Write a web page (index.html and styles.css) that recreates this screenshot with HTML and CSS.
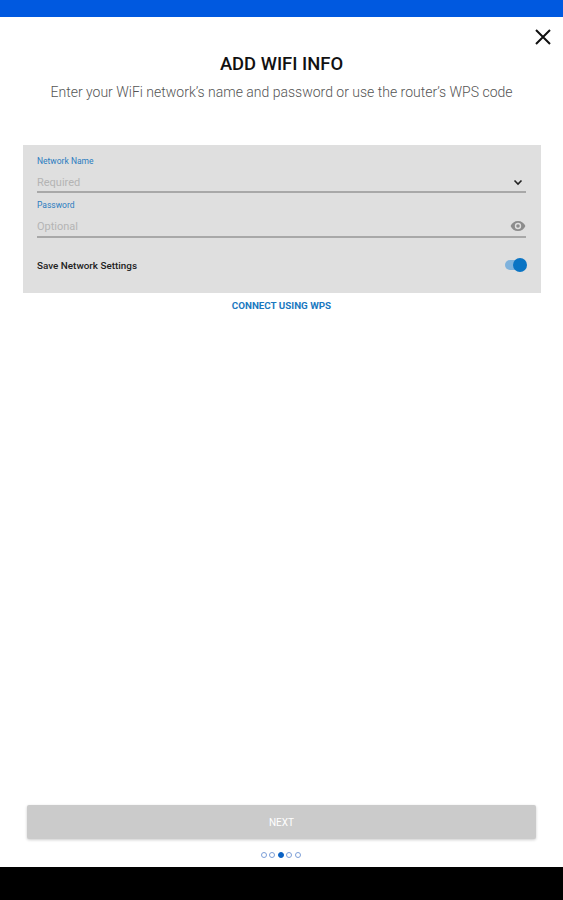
FILE: index.html
```html
<!DOCTYPE html>
<html lang="en">
<head>
    <meta charset="UTF-8">
    <meta name="viewport" content="width=device-width, initial-scale=1.0">
    <title>Add WiFi Info</title>
    <link rel="stylesheet" href="styles.css">
</head>
<body>
    <div class="top-bar"></div>

    <main class="screen">
        <div class="close-row">
            <svg class="close-icon" width="18" height="18" viewBox="0 0 18 18">
                <path d="M2 2 L16 16 M16 2 L2 16" />
            </svg>
        </div>

        <h1>ADD WIFI INFO</h1>
        <p class="subtitle">Enter your WiFi network’s name and password or use the router’s WPS code</p>

        <section class="wifi-panel">
            <div class="field field-name">
                <div class="field-label">Network Name</div>
                <div class="field-input">
                    <span class="placeholder">Required</span>
                    <svg class="chevron" width="10" height="7" viewBox="0 0 10 7">
                        <path d="M1.5 1.5 L5 5 L8.5 1.5" />
                    </svg>
                </div>
            </div>
            <div class="field field-password">
                <div class="field-label">Password</div>
                <div class="field-input">
                    <span class="placeholder">Optional</span>
                    <svg class="eye" width="16" height="12" viewBox="0 0 16 12">
                        <path d="M8 1 C4.6 1 1.8 3 .6 6 C1.8 9 4.6 11 8 11 C11.4 11 14.2 9 15.4 6 C14.2 3 11.4 1 8 1 Z M8 9.2 A3.2 3.2 0 1 1 8 2.8 A3.2 3.2 0 0 1 8 9.2 Z M8 4.2 A1.8 1.8 0 1 0 8 7.8 A1.8 1.8 0 0 0 8 4.2 Z" />
                    </svg>
                </div>
            </div>
            <div class="save-row">
                <span>Save Network Settings</span>
                <div class="toggle"><div class="toggle-thumb"></div></div>
            </div>
        </section>

        <a class="wps-link">CONNECT USING WPS</a>

        <div class="bottom">
            <button class="btn-next" disabled>NEXT</button>
            <div class="dots">
                <span class="dot"></span>
                <span class="dot"></span>
                <span class="dot active"></span>
                <span class="dot"></span>
                <span class="dot"></span>
            </div>
        </div>
    </main>

    <div class="nav-bar"></div>
</body>
</html>
```

FILE: styles.css
```css
html, body {
    height: 100%;
}
body {
    font-family: Roboto, 'Liberation Sans', sans-serif;
    margin: 0;
    display: flex;
    flex-direction: column;
    height: 900px;
    overflow: hidden;
    background-color: white;
}
.top-bar {
    height: 17px;
    background-color: #0059e0;
}
.nav-bar {
    height: 33px;
    background-color: black;
}
.screen {
    flex: 1;
    display: flex;
    flex-direction: column;
    min-height: 0;
}
.close-row {
    display: flex;
    justify-content: flex-end;
    padding: 11px 11px 0 0;
    height: 18px;
}
.close-icon path {
    fill: none;
    stroke: #111;
    stroke-width: 2;
}
h1 {
    margin: 8px 0 0;
    color: #111;
    font-size: 18.4px;
    line-height: 20px;
    font-weight: 500;
    text-align: center;
}
.subtitle {
    margin: 8px 0 0;
    color: #555;
    font-size: 14px;
    font-weight: 300;
    line-height: 20px;
    text-align: center;
}
.wifi-panel {
    margin: 43px 22px 0 23px;
    height: 148px;
    padding: 10px 15px 0 14px;
    box-sizing: border-box;
    background-color: #dfdfdf;
}
.field-label {
    color: #2b7cc0;
    font-size: 8.5px;
    line-height: 12px;
}
.field-input {
    display: flex;
    justify-content: space-between;
    align-items: center;
    box-sizing: border-box;
    height: 26px;
    padding-top: 7px;
    border-bottom: 2px solid #a8a8a8;
}
.field-name {
    margin-bottom: 6px;
}
.field-password .field-input {
    height: 27px;
    padding-top: 5px;
}
.placeholder {
    color: #b4b4b4;
    font-size: 11px;
}
.chevron {
    margin-right: 3px;
}
.chevron path {
    fill: none;
    stroke: #222;
    stroke-width: 1.6;
}
.eye path {
    fill: #8c8c8c;
    fill-rule: evenodd;
}
.save-row {
    display: flex;
    justify-content: space-between;
    align-items: center;
    margin-top: 16px;
    height: 22px;
    color: #222;
    font-size: 9.9px;
    font-weight: 500;
}
.toggle {
    position: relative;
    width: 20px;
    height: 10px;
    margin-right: 1px;
    border-radius: 5px;
    background-color: #7fb2dc;
}
.toggle-thumb {
    position: absolute;
    right: -2px;
    top: -2px;
    width: 14px;
    height: 14px;
    border-radius: 50%;
    background-color: #0a74c4;
}
.wps-link {
    margin-top: 7px;
    color: #1a78bf;
    font-size: 9.8px;
    font-weight: 700;
    line-height: 12px;
    text-align: center;
}
.bottom {
    margin-top: auto;
    display: flex;
    flex-direction: column;
    align-items: center;
}
.btn-next {
    width: 509px;
    height: 34px;
    padding: 0;
    border: none;
    border-radius: 2px;
    background-color: #cbcbcb;
    box-shadow: 0 1px 3px rgba(0,0,0,0.2);
    color: white;
    font-family: inherit;
    font-size: 10px;
}
.dots {
    display: flex;
    gap: 2.5px;
    margin: 13px 2px 9px 0;
}
.dot {
    width: 6px;
    height: 6px;
    box-sizing: border-box;
    border: 1px solid #7d9fd8;
    border-radius: 50%;
}
.dot.active {
    background-color: #0a62c4;
    border-color: #0a62c4;
}
```
